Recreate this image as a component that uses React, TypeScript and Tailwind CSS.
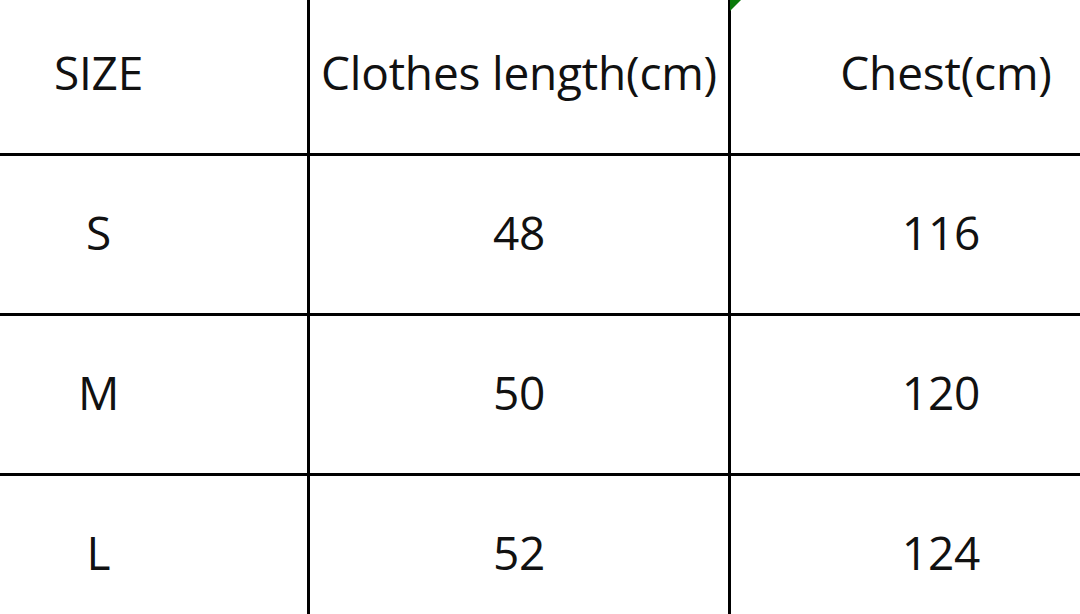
import React from "react";

const rows = [
  ["S", "48", "116"],
  ["M", "50", "120"],
  ["L", "52", "124"],
];

export default function App() {
  return (
    <div className="w-[1080px] h-[614px] overflow-hidden bg-white relative" style={{ fontFamily: '"Open Sans", "Noto Sans", sans-serif' }}>
      <div className="w-[1300px] ml-[-110px] mt-[-4px] flex flex-col text-[46px] text-[#111] tracking-[-0.2px]">
        <div className="flex h-[160px] border-b-[3px] border-black">
          <div className="w-[420px] shrink-0 flex items-center justify-center pb-[5px] border-r-[3px] border-black">SIZE</div>
          <div className="w-[421px] shrink-0 flex items-center justify-center pb-[5px] border-r-[3px] border-black">Clothes length(cm)</div>
          <div className="w-[420px] shrink-0 flex items-center justify-center pb-[5px] pl-[10px]">Chest(cm)</div>
        </div>
        {rows.map((r, i) => (
          <div key={i} className="flex h-[160px] border-b-[3px] border-black">
            <div className="w-[420px] shrink-0 flex items-center justify-center pb-[5px] border-r-[3px] border-black">{r[0]}</div>
            <div className="w-[421px] shrink-0 flex items-center justify-center pb-[5px] border-r-[3px] border-black">{r[1]}</div>
            <div className="w-[420px] shrink-0 flex items-center justify-center pb-[5px]">{r[2]}</div>
          </div>
        ))}
      </div>
      <svg className="absolute left-[730px] top-0" width="12" height="12" viewBox="0 0 12 12">
        <polygon points="0,0 11,0 0,11" fill="#0a7a0a" />
      </svg>
    </div>
  );
}
